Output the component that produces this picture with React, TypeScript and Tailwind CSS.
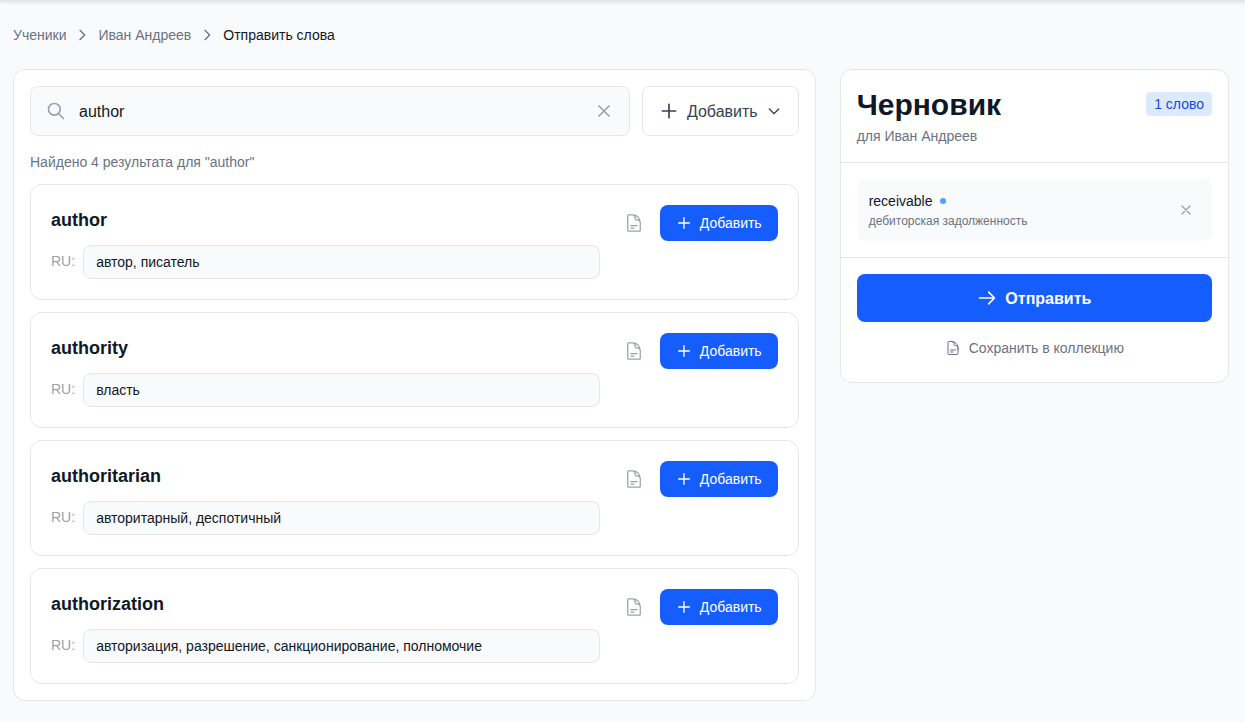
import { useState } from "react";
import {
  HiOutlineArrowRight,
  HiOutlineChevronDown,
  HiOutlineChevronRight,
  HiOutlinePlus,
  HiOutlineSearch,
  HiOutlineX,
} from "react-icons/hi";
import { HiOutlineDocumentText } from "react-icons/hi2";

type Word = { term: string; translation: string };

const results: Word[] = [
  { term: "author", translation: "автор, писатель" },
  { term: "authority", translation: "власть" },
  { term: "authoritarian", translation: "авторитарный, деспотичный" },
  {
    term: "authorization",
    translation: "авторизация, разрешение, санкционирование, полномочие",
  },
];

function ArrowRightIcon() {
  return (
    <svg
      className="size-5"
      viewBox="0 0 24 24"
      fill="none"
      stroke="currentColor"
      strokeWidth={2}
      strokeLinecap="round"
      strokeLinejoin="round"
      aria-hidden="true"
    >
      <path d="M14 5l7 7m0 0l-7 7m7-7H3" />
    </svg>
  );
}

function Breadcrumbs() {
  return (
    <nav className="mb-6 flex items-center gap-2 text-sm text-gray-500">
      <a href="#students">Ученики</a>
      <HiOutlineChevronRight className="size-4" />
      <a href="#student">Иван Андреев</a>
      <HiOutlineChevronRight className="size-4" />
      <span className="font-medium text-gray-900">Отправить слова</span>
    </nav>
  );
}

function SearchBar() {
  const [query, setQuery] = useState("author");
  return (
    <div className="flex gap-3">
      <div className="relative flex-1">
        <HiOutlineSearch className="pointer-events-none absolute top-1/2 left-4 size-5 -translate-y-1/2 text-gray-400" />
        <input
          type="text"
          aria-label="Поиск слов"
          value={query}
          onChange={(e) => setQuery(e.target.value)}
          className="block w-full rounded-lg border border-gray-200 bg-gray-50 px-12 pt-[13px] pb-[11px] text-gray-900 outline-none"
        />
        <button
          type="button"
          aria-label="Очистить"
          onClick={() => setQuery("")}
          className="absolute top-1/2 right-4 -translate-y-1/2 text-gray-400"
        >
          <HiOutlineX className="size-5" />
        </button>
      </div>
      <button
        type="button"
        className="flex items-center gap-2 rounded-lg border border-gray-200 bg-white px-4 py-[11px] font-medium text-gray-700"
      >
        <HiOutlinePlus className="size-5" />
        <span className="pt-0.5">Добавить</span>
        <HiOutlineChevronDown className="size-4" />
      </button>
    </div>
  );
}

function ResultCard({ term, translation }: Word) {
  const [value, setValue] = useState(translation);
  const id = `ru-${term}`;
  return (
    <li className="flex items-start gap-4 rounded-xl border border-gray-200 bg-white p-5">
      <div className="min-w-0 flex-1">
        <h3 className="pt-px text-lg font-semibold text-gray-900">{term}</h3>
        <div className="mt-[11px] flex items-start gap-2 text-sm">
          <label htmlFor={id} className="pt-1.5 text-gray-400">
            RU:
          </label>
          <input
            id={id}
            type="text"
            value={value}
            onChange={(e) => setValue(e.target.value)}
            className="min-w-0 flex-1 rounded-lg border border-gray-200 bg-gray-50 px-3 py-1.5 text-gray-900 outline-none"
          />
        </div>
      </div>
      <div className="flex items-center gap-2">
        <button type="button" aria-label="Подробнее" className="p-2 text-gray-400">
          <HiOutlineDocumentText className="size-5" />
        </button>
        <button
          type="button"
          className="flex items-center gap-2 rounded-lg bg-blue-600 px-4 py-2 text-sm font-medium text-white"
        >
          <HiOutlinePlus className="size-4" />
          Добавить
        </button>
      </div>
    </li>
  );
}

function DraftPanel() {
  return (
    <aside className="rounded-xl border border-gray-200 bg-white">
      <header className="border-b border-gray-200 p-4">
        <div className="flex h-9 items-center justify-between">
          <h2 className="pt-0.5 text-3xl font-bold text-gray-900">Черновик</h2>
          <span className="rounded bg-blue-100 px-2 py-0.5 text-sm font-medium text-blue-700">
            1 слово
          </span>
        </div>
        <p className="mt-1 text-sm text-gray-500">для Иван Андреев</p>
      </header>
      <div className="border-b border-gray-200 p-4">
        <div className="flex items-center justify-between rounded-lg bg-gray-50 p-3">
          <div>
            <div className="flex items-center gap-2 text-sm font-medium text-gray-900">
              receivable
              <span className="size-1.5 rounded-full bg-blue-400" />
            </div>
            <p className="mt-0.5 text-xs text-gray-500">дебиторская задолженность</p>
          </div>
          <button type="button" aria-label="Удалить" className="p-1.5 text-gray-400">
            <HiOutlineX className="size-4" />
          </button>
        </div>
      </div>
      <div className="flex flex-col gap-2 p-4">
        <button
          type="button"
          className="flex items-center justify-center gap-2 rounded-lg bg-blue-600 px-4 py-[11px] font-semibold text-white"
        >
          <ArrowRightIcon />
          <span className="pt-0.5">Отправить</span>
        </button>
        <button
          type="button"
          className="flex items-center justify-center gap-2 px-4 py-2 text-sm text-gray-500"
        >
          <HiOutlineDocumentText className="size-4" />
          Сохранить в коллекцию
        </button>
      </div>
    </aside>
  );
}

export default function App() {
  return (
    <div className="min-h-screen bg-gray-50 font-['Liberation_Sans',sans-serif]">
      <div className="h-0.5 bg-gray-200 shadow-sm" />
      <main className="pt-[23px] pr-4 pb-5 pl-[13px]">
        <Breadcrumbs />
        <div className="grid grid-cols-3 items-start gap-6">
          <section className="col-span-2 rounded-xl border border-gray-200 bg-white p-4">
            <SearchBar />
            <p className="mt-4 mb-3 text-sm text-gray-500">
              Найдено 4 результата для "author"
            </p>
            <ul className="flex flex-col gap-3">
              {results.map((word) => (
                <ResultCard key={word.term} {...word} />
              ))}
            </ul>
          </section>
          <DraftPanel />
        </div>
      </main>
    </div>
  );
}
